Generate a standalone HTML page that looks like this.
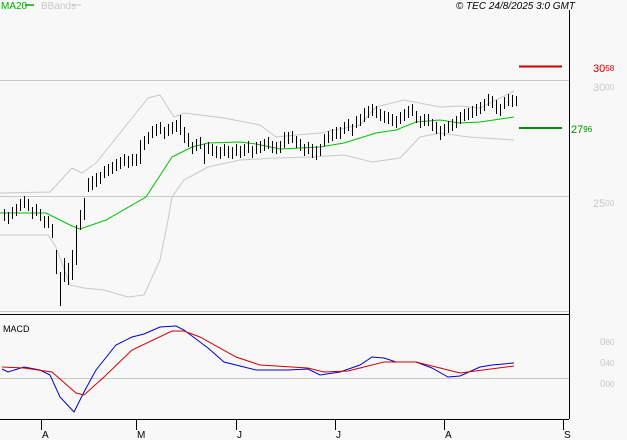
<!DOCTYPE html>
<html><head><meta charset="utf-8"><style>
html,body{margin:0;padding:0;background:#f8f8f8;}
svg{display:block;font-family:"Liberation Sans",sans-serif;}
</style></head><body>
<svg width="627" height="440" viewBox="0 0 627 440" xmlns="http://www.w3.org/2000/svg">
<rect width="627" height="440" fill="#f8f8f8"/>
<text x="1" y="9" font-size="10" fill="#00b000">MA20</text>
<line x1="25" y1="5" x2="34" y2="5" stroke="#00b000" stroke-width="1.5"/>
<text x="41" y="9" font-size="10" fill="#c8c8c8">BBands</text>
<line x1="72" y1="5" x2="81" y2="5" stroke="#c8c8c8"/>
<text x="575" y="9" font-size="10" font-style="italic" fill="#000" text-anchor="end">© TEC 24/8/2025 3:0 GMT</text>
<g stroke="#c8c8c8" stroke-width="1" fill="none">
<line x1="0" y1="80.5" x2="569" y2="80.5"/>
<line x1="0" y1="196.5" x2="569" y2="196.5"/>
<line x1="0" y1="311.5" x2="569" y2="311.5"/>
<line x1="0" y1="378.5" x2="569" y2="378.5"/>
<polyline points="0,193 50,192 72,168 82,173 96,163 148,98 160,95 174,117 184,113 224,118 260,125 276,137 296,135 320,133 360,125 376,107 404,100 440,107 460,106 480,108 514,91"/>
<polyline points="0,235 48,235 56,247 70,285 84,288 104,290 128,297 144,295 160,260 168,220 172,197 184,180 208,167 240,160 276,158 312,157 344,155 372,162 400,158 420,137 440,133 468,137 514,140"/>
</g>
<polyline fill="none" stroke="#00c000" stroke-width="1" points="0,213 46,213 60,220 72,226 80,229 106,220 146,197 172,157 192,147 208,143 240,142 256,144 280,149 320,147 344,143 376,133 396,130 416,122 440,120 460,123 480,122 514,117"/>
<path stroke="#000" stroke-width="1" fill="none" d="M4.5 209v12M8.5 212v12M12.5 207v12M16.5 204v12M20.5 199v12M24.5 196v12M28.5 199v12M32.5 207v12M36.5 204v12M40.5 209v12M44.5 216v12M48.5 216v12M52.5 224v14M56.5 250v24M60.5 272v34M64.5 258v24M68.5 263v22M72.5 250v30M76.5 225v40M80.5 210v20M84.5 198v22M88.5 178v14M92.5 176v14M96.5 173v14M100.5 172v12M104.5 166v12M108.5 164v12M112.5 162v12M116.5 159v12M120.5 157v12M124.5 154v12M128.5 156v12M132.5 154v12M136.5 154v12M140.5 140v24M144.5 136v14M148.5 132v12M152.5 126v12M156.5 124v12M160.5 122v12M164.5 127v12M168.5 124v12M172.5 122v12M176.5 120v12M180.5 115v20M184.5 127v16M188.5 133v14M192.5 142v12M196.5 139v12M200.5 137v12M204.5 144v20M208.5 142v12M212.5 144v12M216.5 146v12M220.5 147v12M224.5 144v12M228.5 146v12M232.5 147v12M236.5 144v12M240.5 146v12M244.5 144v12M248.5 141v12M252.5 146v12M256.5 142v12M260.5 141v12M264.5 139v12M268.5 137v12M272.5 141v12M276.5 142v12M280.5 141v12M284.5 132v16M288.5 132v12M292.5 131v12M296.5 136v12M300.5 139v12M304.5 144v12M308.5 142v12M312.5 144v14M316.5 146v14M320.5 144v12M324.5 134v12M328.5 131v12M332.5 129v12M336.5 127v12M340.5 127v12M344.5 122v12M348.5 119v12M352.5 124v12M356.5 116v12M360.5 114v12M364.5 108v14M368.5 106v12M372.5 104v12M376.5 106v12M380.5 109v12M384.5 111v12M388.5 112v12M392.5 114v12M396.5 116v12M400.5 112v12M404.5 109v12M408.5 106v12M412.5 104v12M416.5 111v12M420.5 116v12M424.5 114v12M428.5 114v12M432.5 119v12M436.5 122v12M440.5 126v14M444.5 124v12M448.5 121v12M452.5 119v12M456.5 116v12M460.5 112v12M464.5 109v12M468.5 108v12M472.5 106v12M476.5 104v12M480.5 102v12M484.5 99v12M488.5 94v12M492.5 96v12M496.5 100v14M500.5 104v12M504.5 97v12M508.5 94v12M512.5 95v12M516.5 96v10"/>
<path stroke="#000" stroke-width="1" d="M0 314.5h569" stroke-width="2"/>
<line x1="569.5" y1="10" x2="569.5" y2="419" stroke="#000"/>
<line x1="0" y1="419.5" x2="569" y2="419.5" stroke="#000"/>
<line x1="519" y1="66.5" x2="562" y2="66.5" stroke="#d00000" stroke-width="2"/>
<line x1="519" y1="128" x2="562" y2="128" stroke="#009000" stroke-width="2"/>
<text x="593" y="72" font-size="11" fill="#d00000">30<tspan font-size="8" dy="-1">58</tspan></text>
<text x="593" y="91" font-size="11" fill="#c8c8c8">30<tspan font-size="8" dy="-1">00</tspan></text>
<text x="593" y="207" font-size="11" fill="#c8c8c8">25<tspan font-size="8" dy="-1">00</tspan></text>
<text x="571" y="133" font-size="11" fill="#009000">27<tspan font-size="8" dy="-1">96</tspan></text>
<text x="3" y="332" font-size="9" fill="#000">MACD</text>
<text x="600" y="345" font-size="10" fill="#c8c8c8">0<tspan font-size="8">80</tspan></text>
<text x="600" y="366" font-size="10" fill="#c8c8c8">0<tspan font-size="8">40</tspan></text>
<text x="600" y="387" font-size="10" fill="#c8c8c8">0<tspan font-size="8">00</tspan></text>
<polyline fill="none" stroke="#0000d0" points="2,369 8,372 24,367 40,370 50,375 60,397 74,412 84,392 96,370 116,345 132,337 144,334 160,327 176,326 184,330 208,348 224,362 256,370 288,370 308,369 320,375 340,372 360,365 372,357 384,358 396,362 416,362 432,368 448,377 460,376 480,367 492,365 514,363"/>
<polyline fill="none" stroke="#d00000" points="2,367 24,368 52,372 76,393 84,395 104,377 132,350 172,331 184,331 200,337 236,357 260,365 308,368 324,372 348,371 384,362 416,362 460,373 514,366"/>
<g stroke="#000"><line x1="41.5" y1="419" x2="41.5" y2="430"/><line x1="136.5" y1="419" x2="136.5" y2="430"/><line x1="236.5" y1="419" x2="236.5" y2="430"/><line x1="335.5" y1="419" x2="335.5" y2="430"/><line x1="444.5" y1="419" x2="444.5" y2="430"/><line x1="563.5" y1="419" x2="563.5" y2="430"/></g>
<g font-size="10" fill="#000"><text x="42" y="438">A</text><text x="137" y="438">M</text><text x="237" y="438">J</text><text x="336" y="438">J</text><text x="445" y="438">A</text><text x="564" y="438">S</text></g>
</svg>
</body></html>
